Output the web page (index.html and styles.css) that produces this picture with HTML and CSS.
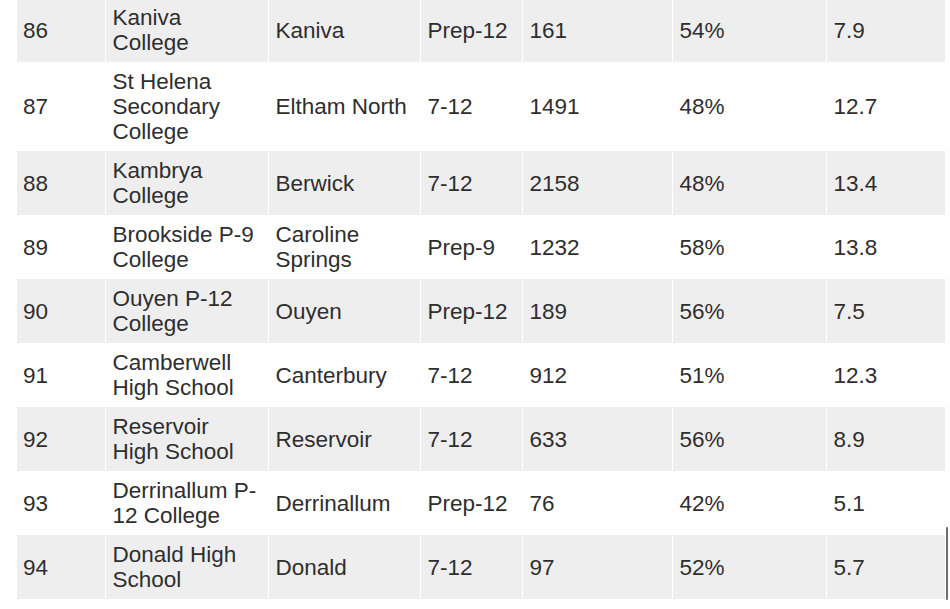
FILE: index.html
```html
<!DOCTYPE html>
<html>
<head>
<meta charset="utf-8">
<link rel="stylesheet" href="styles.css">
</head>
<body>
<div class="wrap">
<table class="schools">
  <colgroup>
    <col class="c-rank"><col class="c-name"><col class="c-loc"><col class="c-grade"><col class="c-enrol"><col class="c-pct"><col class="c-ratio">
  </colgroup>
  <tbody>
    <tr><td>86</td><td class="name">Kaniva College</td><td>Kaniva</td><td>Prep-12</td><td>161</td><td>54%</td><td>7.9</td></tr>
    <tr><td>87</td><td class="name">St Helena Secondary College</td><td>Eltham North</td><td>7-12</td><td>1491</td><td>48%</td><td>12.7</td></tr>
    <tr><td>88</td><td class="name">Kambrya College</td><td>Berwick</td><td>7-12</td><td>2158</td><td>48%</td><td>13.4</td></tr>
    <tr><td>89</td><td class="name">Brookside P-9 College</td><td>Caroline Springs</td><td>Prep-9</td><td>1232</td><td>58%</td><td>13.8</td></tr>
    <tr><td>90</td><td class="name">Ouyen P-12 College</td><td>Ouyen</td><td>Prep-12</td><td>189</td><td>56%</td><td>7.5</td></tr>
    <tr><td>91</td><td class="name">Camberwell High School</td><td>Canterbury</td><td>7-12</td><td>912</td><td>51%</td><td>12.3</td></tr>
    <tr><td>92</td><td class="name">Reservoir High School</td><td>Reservoir</td><td>7-12</td><td>633</td><td>56%</td><td>8.9</td></tr>
    <tr><td>93</td><td class="name">Derrinallum P-12 College</td><td>Derrinallum</td><td>Prep-12</td><td>76</td><td>42%</td><td>5.1</td></tr>
    <tr><td>94</td><td class="name">Donald High School</td><td>Donald</td><td>7-12</td><td>97</td><td>52%</td><td>5.7</td></tr>
  </tbody>
</table>
<div class="scroll-thumb"></div>
</div>
</body>
</html>
```
FILE: styles.css
```css
html, body {
  margin: 0;
  padding: 0;
  background: #ffffff;
}
.wrap {
  position: relative;
  width: 950px;
  height: 609px;
  overflow: hidden;
}
.schools {
  margin: -2px 0 0 17px;
  border-collapse: collapse;
  table-layout: fixed;
  width: 928px;
  font-family: "Liberation Sans", Arial, sans-serif;
  font-size: 22.5px;
  line-height: 25px;
  color: #2e2e2e;
}
.c-rank { width: 88px; }
.c-name { width: 163px; }
.c-loc { width: 152px; }
.c-grade { width: 102px; }
.c-enrol { width: 150px; }
.c-pct { width: 154px; }
.c-ratio { width: 119px; }
.schools td {
  padding: 7px 6px 7px 7px;
  vertical-align: middle;
  border-left: 1px solid #ffffff;
}
.schools td:first-child {
  border-left: none;
  padding-left: 6px;
}
.schools td.name {
  padding-right: 9px;
}
.schools tr:nth-child(odd) td {
  background: #eeeeee;
}
.schools tr:nth-child(even) td {
  background: #ffffff;
}
.scroll-thumb {
  position: absolute;
  left: 946px;
  top: 527px;
  width: 2px;
  height: 73px;
  background: #6e6e6e;
  border-radius: 1px;
}
```
